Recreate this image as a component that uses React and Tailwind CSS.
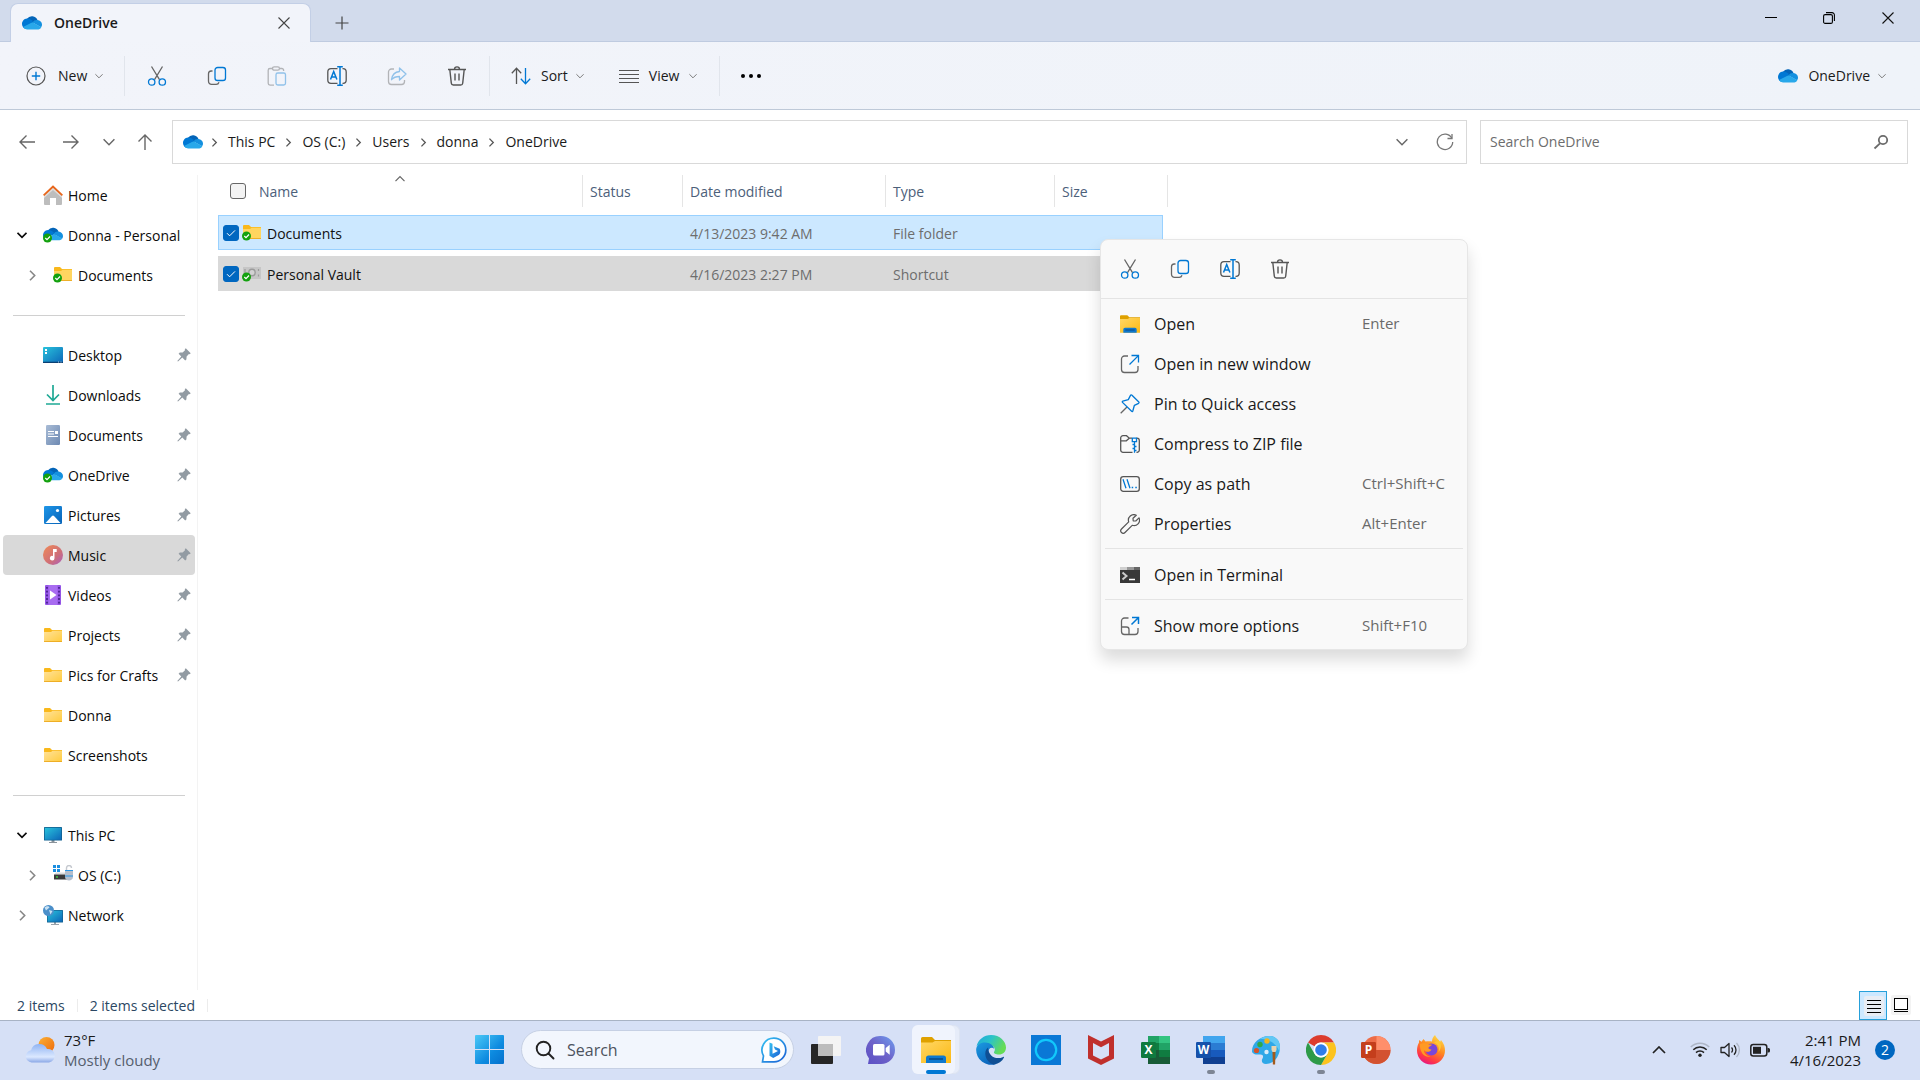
import { useState } from 'react';

const sidebarTop = [
  { label: 'Home', icon: HomeIcon },
  { label: 'Donna - Personal', icon: SyncedCloudIcon, expand: 'open' },
  { label: 'Documents', icon: SyncedFolderIcon, expand: 'closed', nested: true },
];

const sidebarPinned = [
  { label: 'Desktop', icon: DesktopIcon, pinned: true },
  { label: 'Downloads', icon: DownloadsIcon, pinned: true },
  { label: 'Documents', icon: DocumentIcon, pinned: true },
  { label: 'OneDrive', icon: SyncedCloudIcon, pinned: true },
  { label: 'Pictures', icon: PicturesIcon, pinned: true },
  { label: 'Music', icon: MusicIcon, pinned: true, active: true },
  { label: 'Videos', icon: VideosIcon, pinned: true },
  { label: 'Projects', icon: FolderIcon, pinned: true },
  { label: 'Pics for Crafts', icon: FolderIcon, pinned: true },
  { label: 'Donna', icon: FolderIcon },
  { label: 'Screenshots', icon: FolderIcon },
];

const sidebarDevices = [
  { label: 'This PC', icon: ThisPcIcon, expand: 'open' },
  { label: 'OS (C:)', icon: DriveIcon, expand: 'closed', nested: true },
  { label: 'Network', icon: NetworkIcon, expand: 'closed' },
];

const files = [
  { name: 'Documents', icon: SyncedFolderIcon, modified: '4/13/2023 9:42 AM', type: 'File folder' },
  { name: 'Personal Vault', icon: VaultIcon, modified: '4/16/2023 2:27 PM', type: 'Shortcut' },
];

const menuGroups = [
  [
    { label: 'Open', icon: ExplorerIcon, shortcut: 'Enter' },
    { label: 'Open in new window', icon: NewWindowIcon },
    { label: 'Pin to Quick access', icon: PinOutlineIcon },
    { label: 'Compress to ZIP file', icon: ZipIcon },
    { label: 'Copy as path', icon: CopyPathIcon, shortcut: 'Ctrl+Shift+C' },
    { label: 'Properties', icon: WrenchIcon, shortcut: 'Alt+Enter' },
  ],
  [{ label: 'Open in Terminal', icon: TerminalIcon }],
  [{ label: 'Show more options', icon: MoreOptionsIcon, shortcut: 'Shift+F10' }],
];

const taskbarApps = [
  { label: 'Task view', icon: TaskViewIcon },
  { label: 'Chat', icon: ChatIcon },
  { label: 'File Explorer', icon: ExplorerIcon, active: true },
  { label: 'Microsoft Edge', icon: EdgeIcon },
  { label: 'Alexa', icon: AlexaIcon },
  { label: 'McAfee', icon: McAfeeIcon },
  { label: 'Excel', icon: ExcelIcon },
  { label: 'Word', icon: WordIcon, running: true },
  { label: 'Paint', icon: PaintIcon },
  { label: 'Chrome', icon: ChromeIcon, running: true },
  { label: 'PowerPoint', icon: PowerPointIcon },
  { label: 'Firefox', icon: FirefoxIcon },
];

export default function App() {
  return (
    <div className="h-screen flex flex-col overflow-hidden bg-white font-['Open_Sans',sans-serif] text-sm text-[#1a1a1a]">
      <TitleBar />
      <Toolbar />
      <AddressRow />
      <div className="flex-1 min-h-0 flex relative">
        <Sidebar />
        <FileList />
        <ContextMenu />
      </div>
      <StatusBar />
      <Taskbar />
    </div>
  );
}

function TitleBar() {
  return (
    <header className="h-[42px] shrink-0 flex items-end bg-[#d2dbec] border-b border-[#bfcbe0]">
      <div className="ml-[10px] -mb-px w-[301px] h-[39px] flex items-center pl-[11px] pr-4 rounded-t-lg border border-b-0 border-[#c3cfe6] bg-[#f2f4fa]">
        <CloudIcon className="w-5 h-5" />
        <span className="ml-3 font-semibold flex-1">OneDrive</span>
        <button aria-label="Close tab" className="p-1 text-[#444]">
          <CrossIcon className="w-3 h-3" />
        </button>
      </div>
      <button aria-label="New tab" className="h-9 w-9 ml-[13px] flex items-center justify-center text-[#444]">
        <svg viewBox="0 0 14 14" className="w-[14px] h-[14px]" stroke="currentColor" strokeWidth="1.2"><path d="M7 .5v13M.5 7h13" /></svg>
      </button>
      <div className="ml-auto mr-0.5 self-stretch flex text-[#111]">
        <button aria-label="Minimize" className="w-[58px] h-9 flex items-center justify-center">
          <svg viewBox="0 0 12 12" className="w-3 h-3" stroke="#000"><path d="M0 5.500h12" /></svg>
        </button>
        <button aria-label="Restore" className="w-[58px] h-9 flex items-center justify-center">
          <svg viewBox="0 0 12 12" className="w-3 h-3" fill="none" stroke="#000" strokeWidth="1.1">
            <rect x=".6" y="2.6" width="8.8" height="8.8" rx="1.5" />
            <path d="M3 .6h6a2.400 2.400 0 0 1 2.400 2.400v6" />
          </svg>
        </button>
        <button aria-label="Close" className="w-[60px] h-9 flex items-center justify-center">
          <CrossIcon className="w-3 h-3" />
        </button>
      </div>
    </header>
  );
}

function Toolbar() {
  return (
    <div className="h-[68px] shrink-0 flex items-center bg-gradient-to-r from-[#f2f4fa] to-[#eff3f9] border-b border-[#bec9d8]">
      <button className="w-[124px] h-10 pl-[26px] flex items-center">
        <svg viewBox="0 0 20 20" className="w-5 h-5" fill="none">
          <circle cx="10" cy="10" r="9" stroke="#555" strokeWidth="1.2" />
          <path d="M10 5.800v8.400M5.800 10h8.400" stroke="#0078d4" strokeWidth="1.4" />
        </svg>
        <span className="ml-3">New</span>
        <ChevronDown className="w-2 h-2 ml-2 text-[#777]" />
      </button>
      <Divider />
      <div className="flex px-[2px]">
        <ToolButton label="Cut"><CutIcon className="w-5 h-5" /></ToolButton>
        <ToolButton label="Copy"><CopyIcon className="w-5 h-5" /></ToolButton>
        <ToolButton label="Paste" disabled><PasteIcon className="w-5 h-5" /></ToolButton>
        <ToolButton label="Rename"><RenameIcon className="w-5 h-5" /></ToolButton>
        <ToolButton label="Share" disabled><ShareIcon className="w-5 h-5" /></ToolButton>
        <ToolButton label="Delete"><TrashIcon className="w-5 h-5" /></ToolButton>
      </div>
      <Divider />
      <button className="h-10 pl-[21px] flex items-center">
        <svg viewBox="0 0 20 20" className="w-5 h-5" fill="none" strokeWidth="1.3">
          <path d="M5.500 18V2.500M.8 7.200l4.700-4.900 4.700 4.900" stroke="#555" />
          <path d="M14.500 2v15.500M9.800 12.800l4.700 4.900 4.700-4.900" stroke="#0078d4" />
        </svg>
        <span className="ml-[10px]">Sort</span>
        <ChevronDown className="w-2 h-2 ml-2 text-[#777]" />
      </button>
      <button className="h-10 pl-[35px] flex items-center">
        <svg viewBox="0 0 20 20" className="w-5 h-5" stroke="#555" strokeWidth="1.2">
          <path d="M0 4.500h20M0 8.500h20M0 12.500h20M0 16.500h20" />
        </svg>
        <span className="ml-[10px]">View</span>
        <ChevronDown className="w-2 h-2 ml-[10px] mr-[22px] text-[#777]" />
      </button>
      <Divider />
      <button aria-label="See more" className="w-[62px] h-10 flex items-center justify-center">
        <svg viewBox="0 0 22 6" className="w-[22px] h-[6px]"><circle cx="3" cy="3" r="2" /><circle cx="11" cy="3" r="2" /><circle cx="19" cy="3" r="2" /></svg>
      </button>
      <button className="h-10 ml-auto mr-[34px] flex items-center">
        <CloudIcon className="w-5 h-5" />
        <span className="ml-[10px]">OneDrive</span>
        <ChevronDown className="w-2 h-2 ml-2 text-[#777]" />
      </button>
    </div>
  );
}

function Divider() {
  return <div className="w-px h-10 bg-[#e1e5ec]" />;
}

function ToolButton({ label, disabled, children }) {
  return (
    <button aria-label={label} disabled={disabled} className="w-[60px] h-10 flex items-center justify-center disabled:opacity-40">
      {children}
    </button>
  );
}

function AddressRow() {
  const crumbs = ['This PC', 'OS (C:)', 'Users', 'donna', 'OneDrive'];
  return (
    <div className="shrink-0 flex items-center pt-[10px] px-3 text-[#1a1a1a]">
      <button aria-label="Back" className="w-[30px] h-8 flex items-center justify-center">
        <ArrowIcon className="w-4 h-4" />
      </button>
      <button aria-label="Forward" className="w-[30px] ml-[14px] h-8 flex items-center justify-center">
        <ArrowIcon className="w-4 h-4 rotate-180" />
      </button>
      <button aria-label="Recent locations" className="w-[30px] ml-2 h-8 flex items-center justify-center">
        <ChevronDown className="w-3 h-3 text-[#666]" />
      </button>
      <button aria-label="Up" className="w-[30px] ml-[6px] h-8 flex items-center justify-center">
        <ArrowIcon className="w-4 h-4 rotate-90" />
      </button>
      <nav aria-label="Address" className="ml-3 flex-1 h-11 flex items-center border border-[#d9d9d9] pl-[10px] pr-2">
        <CloudIcon className="w-5 h-5 mr-2" />
        {crumbs.map((crumb) => (
          <span key={crumb} className="flex items-center">
            <ChevronRight className="w-[7px] h-[9px] text-[#555]" />
            <a href="#" className="mx-[10px]">{crumb}</a>
          </span>
        ))}
        <button aria-label="Previous locations" className="ml-auto p-2">
          <ChevronDown className="w-3 h-3 text-[#666]" />
        </button>
        <button aria-label="Refresh" className="ml-4 p-1">
          <svg viewBox="0 0 18 18" className="w-[18px] h-[18px]" fill="none" stroke="#777" strokeWidth="1.3">
            <path d="M15.800 5.200A7.700 7.700 0 1 0 16.700 9" />
            <path d="M16 1v4.500h-4.500" />
          </svg>
        </button>
      </nav>
      <div className="ml-[13px] w-[428px] shrink-0 h-11 flex items-center border border-[#d9d9d9] pl-[9px] pr-[18px]">
        <input aria-label="Search OneDrive" placeholder="Search OneDrive" className="flex-1 min-w-0 bg-transparent outline-none placeholder:text-[#6d6d6d]" />
        <svg viewBox="0 0 16 16" className="w-4 h-4" fill="none" stroke="#6b6b6b" strokeWidth="1.8">
          <circle cx="10" cy="6" r="4.2" />
          <path d="M7 9.300L1.500 14.500" />
        </svg>
      </div>
    </div>
  );
}

function Sidebar() {
  return (
    <aside className="w-[198px] shrink-0 mt-[11px] pl-[3px] pr-[2px] border-r border-[#f3f3f3] text-[#0b0b0b]">
      <SidebarSection items={sidebarTop} />
      <SidebarRule />
      <SidebarSection items={sidebarPinned} />
      <SidebarRule />
      <SidebarSection items={sidebarDevices} />
    </aside>
  );
}

function SidebarRule() {
  return <div className="h-10 flex items-center px-[10px]"><hr className="flex-1 border-[#d0d0d0]" /></div>;
}

function SidebarSection({ items }) {
  return (
    <ul>
      {items.map(({ label, icon: Icon, expand, nested, pinned, active }) => (
        <li key={label}>
          <a href="#" className={`h-10 flex items-center rounded-sm pr-1 whitespace-nowrap ${nested ? 'pl-6' : 'pl-[14px]'} ${active ? 'bg-[#d9d9d9]' : ''}`}>
            <span className={`w-[26px] flex items-center ${expand === 'closed' ? 'pl-[2px]' : ''}`}>
              {expand === 'open' && <ChevronDown className="w-[10px] h-[10px]" strokeWidth="1.7" />}
              {expand === 'closed' && <ChevronRight className="w-[7px] h-[11px] text-[#888]" />}
            </span>
            <Icon className="w-5 h-5 shrink-0" />
            <span className="ml-[5px] flex-1 pt-0.5">{label}</span>
            {pinned && <PinIcon className="w-[14px] h-[14px]" />}
          </a>
        </li>
      ))}
    </ul>
  );
}

function FileList() {
  const [selected, setSelected] = useState([0, 1]);
  const toggle = (i) => setSelected(s => (s.includes(i) ? s.filter(n => n !== i) : [...s, i]));

  return (
    <main className="flex-1 min-w-0 pt-[11px] pl-5">
      <table className="table-fixed w-[950px] border-separate border-spacing-0 text-left">
        <colgroup>
          <col className="w-[365px]" />
          <col className="w-[100px]" />
          <col className="w-[203px]" />
          <col className="w-[169px]" />
          <col />
        </colgroup>
        <thead className="text-[#4c607a]">
          <tr className="h-8">
            <th className="font-normal p-0 border-r border-[#e5e5e5] relative">
              <div className="flex items-center pl-3">
                <input type="checkbox" aria-label="Select all" className="appearance-none w-4 h-4 rounded-[3px] border border-[#666] bg-[#f3f3f3]" />
                <span className="ml-[13px] pt-0.5">Name</span>
              </div>
              <ChevronDown className="absolute inset-x-0 mx-auto -top-px w-[10px] h-[10px] rotate-180 text-[#666]" />
            </th>
            <HeaderCell>Status</HeaderCell>
            <HeaderCell>Date modified</HeaderCell>
            <HeaderCell>Type</HeaderCell>
            <HeaderCell>Size</HeaderCell>
          </tr>
        </thead>
        <tbody className="text-[#6d6d6d]">
          {files.map(({ name, icon: Icon, modified, type }, i) => {
            const tone = i === 0 ? 'bg-[#cce8ff] border-[#99d1ff]' : 'bg-[#d9d9d9] border-[#d9d9d9]';
            return (
              <tr key={name}>
                <td className={i === 0 ? 'p-0 pt-2' : 'p-0 pt-[6px]'}>
                  <div className={`h-[35px] flex items-center pl-1 border border-r-0 ${tone}`}>
                    <input
                      type="checkbox"
                      id={`file-${i}`}
                      checked={selected.includes(i)}
                      onChange={() => toggle(i)}
                      className="appearance-none w-4 h-4 rounded-[3px] bg-white border border-[#0067c0] checked:bg-[#0067c0] checked:bg-[url('data:image/svg+xml,%3Csvg%20xmlns=%22http://www.w3.org/2000/svg%22%20viewBox=%220%200%2014%2014%22%3E%3Cpath%20d=%22M3%207.200l2.600%202.600L11%204.400%22%20fill=%22none%22%20stroke=%22white%22/%3E%3C/svg%3E')]"
                    />
                    <Icon className="w-5 h-5 ml-[3px]" />
                    <label htmlFor={`file-${i}`} className="ml-[5px] pt-0.5 text-[#111]">{name}</label>
                  </div>
                </td>
                <FileCell tone={tone} first={i === 0} />
                <FileCell tone={tone} first={i === 0}>{modified}</FileCell>
                <FileCell tone={tone} first={i === 0}>{type}</FileCell>
                <td className={i === 0 ? 'p-0 pt-2 pr-[5px]' : 'p-0 pt-[6px] pr-[5px]'}>
                  <div className={`h-[35px] border border-l-0 ${tone}`} />
                </td>
              </tr>
            );
          })}
        </tbody>
      </table>
    </main>
  );
}

function HeaderCell({ children }) {
  return <th className="font-normal p-0 pt-0.5 pl-[7px] border-r border-[#e5e5e5]">{children}</th>;
}

function FileCell({ tone, first, children }) {
  return (
    <td className={first ? 'p-0 pt-2' : 'p-0 pt-[6px]'}>
      <div className={`h-[35px] flex items-center pt-0.5 pl-[7px] border-y ${tone}`}>{children}</div>
    </td>
  );
}

function ContextMenu() {
  return (
    <div role="menu" className="absolute left-[1100px] top-[75px] w-[368px] rounded-lg border border-[#e6e6e6] bg-[#f9f9f9] shadow-[0_10px_16px_rgba(0,0,0,0.14)] pb-[3px]">
      <div className="h-[59px] flex items-center pl-1 border-b border-[#e4e4e4]">
        <MenuIconButton label="Cut"><CutIcon className="w-5 h-5" /></MenuIconButton>
        <MenuIconButton label="Copy"><CopyIcon className="w-5 h-5" /></MenuIconButton>
        <MenuIconButton label="Rename"><RenameIcon className="w-5 h-5" /></MenuIconButton>
        <MenuIconButton label="Delete"><TrashIcon className="w-5 h-5" /></MenuIconButton>
      </div>
      {menuGroups.map((group, i) => (
        <div key={i} className={i === 0 ? 'pt-[5px] pb-1' : 'mx-1 border-t border-[#e4e4e4] pt-[6px] pb-1 last:pb-0'}>
          {group.map(({ label, icon: Icon, shortcut }) => (
            <button key={label} role="menuitem" className={`w-full h-10 flex items-center text-left ${i === 0 ? 'pl-[19px]' : 'pl-[15px]'}`}>
              <Icon className="w-5 h-5" />
              <span className="ml-[14px] w-[208px] text-base">{label}</span>
              <span className="text-[15px] text-[#6a6a6a]">{shortcut}</span>
            </button>
          ))}
        </div>
      ))}
    </div>
  );
}

function MenuIconButton({ label, children }) {
  return <button aria-label={label} className="w-[50px] h-10 flex items-center justify-center">{children}</button>;
}

function StatusBar() {
  return (
    <footer className="h-[30px] shrink-0 flex items-center pl-[17px] pr-[9px] text-[#2b4763]">
      <span className="pt-0.5">2 items</span>
      <span className="w-px h-[13px] mx-3 bg-[#ececec]" />
      <span className="pt-0.5">2 items selected</span>
      <span className="w-px h-[13px] mx-3 bg-[#ececec]" />
      <button aria-label="Details view" className="ml-auto w-7 h-[29px] flex items-center justify-center border border-[#26a0da] bg-[#cce8ff]">
        <svg viewBox="0 0 20 20" className="w-5 h-5 mt-px ml-px"><rect width="20" height="20" rx="2" fill="#e8edf4" /><path d="M3 4.500h14M3 8.500h14M3 12.500h14M3 16.500h14" stroke="#000" /></svg>
      </button>
      <button aria-label="Large icons view" className="ml-1">
        <svg viewBox="0 0 20 20" className="w-5 h-5" stroke="#000"><rect width="20" height="20" rx="2" fill="#f3f3f3" stroke="none" /><rect x="3.5" y="3.5" width="13" height="11" fill="#fff" /><path d="M3 16.500h14" /></svg>
      </button>
    </footer>
  );
}

function Taskbar() {
  return (
    <div className="h-[60px] shrink-0 grid grid-cols-[1fr_auto_1fr] items-center pb-0.5 bg-[#d6e0f6] border-t border-[#a8b3c5] text-[15px]">
      <button className="flex items-center text-left pl-6 leading-5">
        <WeatherIcon className="w-8 h-8" />
        <span className="ml-2">
          <span className="block">73°F</span>
          <span className="block text-[#555e6d]">Mostly cloudy</span>
        </span>
      </button>

      <div className="flex items-center">
        <button aria-label="Start" className="w-[55px] h-12 flex items-center justify-center">
          <StartIcon className="w-[29px] h-[29px]" />
        </button>
        <div className="mx-1 w-[273px] h-[39px] rounded-full bg-[#f2f6fd] border border-[#c6d0e4] flex items-center pl-[13px] pr-[6px]">
          <svg viewBox="0 0 20 20" className="w-5 h-5" fill="none" stroke="#222" strokeWidth="1.9">
            <circle cx="8.5" cy="8.5" r="6.8" /><path d="M13.500 13.500l5 5" strokeLinecap="round" />
          </svg>
          <input aria-label="Search" placeholder="Search" className="ml-3 flex-1 min-w-0 bg-transparent outline-none placeholder:text-[#4d535e] text-base" />
          <BingIcon className="w-[26px] h-[26px]" />
        </div>
        {taskbarApps.map(({ label, icon: Icon, active, running }) => (
          <button key={label} aria-label={label} className="w-[55px] h-[49px] relative flex items-center justify-center">
            {active && <span className="absolute inset-y-0 left-1 w-[48px] rounded-md border border-[#dde4f2] bg-[#e6ecf9]" />}
            {active && <span className="absolute inset-y-0 left-1 w-[43px] rounded-md bg-[#f0f4fd]" />}
            <Icon className="relative w-[30px] h-[30px]" />
            {active && <span className="absolute bottom-0 w-5 h-1 rounded-full bg-[#0078d4]" />}
            {running && <span className="absolute bottom-0 w-2 h-1 rounded-full bg-[#7d8594]" />}
          </button>
        ))}
      </div>

      <div className="flex items-center justify-end pr-[25px]">
        <button aria-label="Show hidden icons" className="mr-6">
          <svg viewBox="0 0 14 8" className="w-[14px] h-2" fill="none" stroke="#222" strokeWidth="1.7"><path d="M1 7l6-6 6 6" /></svg>
        </button>
        <button aria-label="Network, volume and battery" className="flex items-center gap-[10px]">
          <WifiIcon className="w-5 h-5" />
          <VolumeIcon className="w-5 h-5" />
          <BatteryIcon className="w-5 h-5" />
        </button>
        <button className="ml-5 text-right leading-5">
          <span className="block">2:41 PM</span>
          <span className="block">4/16/2023</span>
        </button>
        <span className="ml-[14px] w-5 h-5 rounded-full bg-[#0067c0] text-white text-sm leading-5 text-center">2</span>
      </div>
    </div>
  );
}

// Line icons

function CrossIcon({ className }) {
  return <svg viewBox="0 0 12 12" className={className} stroke="currentColor" strokeWidth="1.1"><path d="M.5.5l11 11M11.500.5l-11 11" /></svg>;
}

function ChevronDown({ className, strokeWidth = 1.2 }) {
  return <svg viewBox="0 0 10 10" className={className} fill="none" stroke="currentColor" strokeWidth={strokeWidth}><path d="M.5 2.800L5 7.300l4.500-4.500" /></svg>;
}

function ChevronRight({ className }) {
  return <svg viewBox="0 0 7 11" className={className} fill="none" stroke="currentColor" strokeWidth="1.6"><path d="M1 .8l4.700 4.700L1 10.200" /></svg>;
}

function ArrowIcon({ className }) {
  return <svg viewBox="0 0 16 16" className={className} fill="none" stroke="#666" strokeWidth="1.4"><path d="M16 8H1M7.500 1.500L1 8l6.500 6.500" /></svg>;
}

function CutIcon({ className }) {
  return (
    <svg viewBox="0 0 20 20" className={className} fill="none" strokeWidth="1.3">
      <path d="M4.500.5l8 13.200M15.500.5l-8 13.200" stroke="#666" />
      <circle cx="4.7" cy="16" r="3.2" stroke="#0078d4" />
      <circle cx="15.3" cy="16" r="3.2" stroke="#0078d4" />
    </svg>
  );
}

function CopyIcon({ className }) {
  return (
    <svg viewBox="0 0 20 20" className={className} fill="none" strokeWidth="1.3">
      <path d="M5.500 5H4.200A2.800 2.800 0 0 0 1.500 7.800v7.500A3 3 0 0 0 4.500 18.300h4.700a3 3 0 0 0 2.800-2.100" stroke="#666" />
      <rect x="8" y="1.5" width="10.5" height="13" rx="2.6" stroke="#0078d4" />
    </svg>
  );
}

function PasteIcon({ className }) {
  return (
    <svg viewBox="0 0 20 20" className={className} fill="none" strokeWidth="1.3">
      <path d="M6 2.500H3A1.800 1.800 0 0 0 1.200 4.300v13A1.800 1.800 0 0 0 3 19.100h4M13 2.500h1.800a1.800 1.800 0 0 1 1.800 1.800v.8" stroke="#555" />
      <rect x="5.5" y=".8" width="7" height="3.4" rx="1.7" stroke="#555" />
      <rect x="9" y="7" width="9.5" height="12" rx="1.8" stroke="#0078d4" />
    </svg>
  );
}

function RenameIcon({ className }) {
  return (
    <svg viewBox="0 0 20 20" className={className} fill="none" strokeWidth="1.3">
      <path d="M10.500 2.600H4A3.300 3.300 0 0 0 .8 5.900v8.200A3.300 3.300 0 0 0 4 17.400h6.500M15.500 2.600h.5a3.300 3.300 0 0 1 3.200 3.300v8.200a3.300 3.300 0 0 1-3.200 3.300h-.5" stroke="#555" />
      <path d="M3.500 13.500L6.700 5.500l3.200 8M4.600 11h4.200" stroke="#0078d4" strokeWidth="1.5" />
      <path d="M13 1v18M10.200.8h5.600M10.200 19.200h5.600" stroke="#0078d4" strokeWidth="1.5" />
    </svg>
  );
}

function ShareIcon({ className }) {
  return (
    <svg viewBox="0 0 20 20" className={className} fill="none" strokeWidth="1.3" strokeLinejoin="round">
      <path d="M7 3H4.500A3 3 0 0 0 1.500 6v9.500a3 3 0 0 0 3 3h10a3 3 0 0 0 3-3V14" stroke="#555" />
      <path d="M12.500 2l6.500 6-6.500 6v-3.500c-3.800 0-6 .8-8 3.200.6-4.500 3-7.700 8-8.200z" stroke="#0078d4" />
    </svg>
  );
}

function TrashIcon({ className }) {
  return (
    <svg viewBox="0 0 20 20" className={className} fill="none" stroke="#555" strokeWidth="1.4">
      <path d="M1 3.500h18M7.500 3.200a2.500 2.300 0 0 1 5 0M2.800 3.500l1.500 13.700a2 2 0 0 0 2 1.800h7.400a2 2 0 0 0 2-1.800l1.500-13.700M8 7.500v7M12 7.500v7" />
    </svg>
  );
}

function NewWindowIcon({ className }) {
  return (
    <svg viewBox="0 0 20 20" className={className} fill="none" strokeWidth="1.3">
      <path d="M8 2H4.500A3 3 0 0 0 1.500 5v10.500a3 3 0 0 0 3 3H15a3 3 0 0 0 3-3V12" stroke="#666" />
      <path d="M9.500 10.500L18.400 1.600M11.500 1.500h7v7" stroke="#0078d4" />
    </svg>
  );
}

function PinOutlineIcon({ className }) {
  return (
    <svg viewBox="0 0 20 20" className={className} fill="none" strokeWidth="1.3" strokeLinejoin="round">
      <path d="M7 13L.7 19.300" stroke="#666" />
      <path d="M12 1.200l6.800 6.800c.5.500.3 1-.2 1.300l-4.200 2-1.600 5.700c-.2.600-.8.700-1.200.3L2.500 8.400c-.4-.4-.3-1 .3-1.200L8.300 5.600l2.200-4.200c.3-.6 1-.7 1.500-.2z" stroke="#0078d4" />
    </svg>
  );
}

function ZipIcon({ className }) {
  return (
    <svg viewBox="0 0 20 20" className={className} fill="none" strokeWidth="1.3">
      <path d="M12.500 18.300H3a2.300 2.300 0 0 1-2.300-2.300V4A2.300 2.300 0 0 1 3 1.700h3.500l2.800 2.500H12M16.500 4.200h.5A2.300 2.300 0 0 1 19.300 6.500v9.500a2.300 2.300 0 0 1-2.300 2.300h-.5M.7 6.800h5.600l3-2.600" stroke="#555" />
      <path d="M12 4.200h5M12.300 4.200v3.500h4.200V4.200M14.500 7.700v11M12.500 10.500h2M14.500 12.500h2M12.500 14.500h2M14.500 16.500h2" stroke="#0078d4" />
    </svg>
  );
}

function CopyPathIcon({ className }) {
  return (
    <svg viewBox="0 0 20 20" className={className} fill="none">
      <rect x=".7" y="2.7" width="18.6" height="14.6" rx="2.6" stroke="#555" strokeWidth="1.3" />
      <path d="M3 5.300l3 9M7 5.300l3 9" stroke="#0078d4" strokeWidth="1.3" />
      <path d="M11.700 13.500h1.500M15.300 13.500h1.500" stroke="#0078d4" strokeWidth="1.6" />
    </svg>
  );
}

function WrenchIcon({ className }) {
  return (
    <svg viewBox="0 0 20 20" className={className} fill="none" stroke="#555" strokeWidth="1.2" strokeLinejoin="round">
      <path d="M16.300 1.200a5.500 5.500 0 0 0-7.600 6.700L1.500 15a2.400 2.400 0 0 0 3.500 3.500l7.200-7.200a5.500 5.500 0 0 0 6.800-7.500L15.800 7l-2.600-.2-.2-2.500z" />
    </svg>
  );
}

function TerminalIcon({ className }) {
  return (
    <svg viewBox="0 0 20 20" className={className}>
      <path d="M0 2h20v16H0z" fill="#383838" />
      <path d="M0 2h7v3H0z" fill="#d0d0d0" /><path d="M7 2h7v3H7z" fill="#999" /><path d="M14 2h6v3h-6z" fill="#666" />
      <path d="M2.500 7.500L6.500 11l-4 3.500" fill="none" stroke="#ccc" strokeWidth="2" />
      <path d="M9 14.500h6" stroke="#fff" strokeWidth="1.5" />
    </svg>
  );
}

function MoreOptionsIcon({ className }) {
  return (
    <svg viewBox="0 0 20 20" className={className} fill="none" strokeWidth="1.3">
      <path d="M8.500 2H4.500A3 3 0 0 0 1.500 5v10.500a3 3 0 0 0 3 3H15a3 3 0 0 0 3-3V12M1.500 11h5a2.500 2.500 0 0 1 2.500 2.500v5" stroke="#666" />
      <path d="M11.500 8.500L18.300 1.700M12 1.500h6.500v6.500" stroke="#0078d4" strokeWidth="1.5" />
    </svg>
  );
}

function PinIcon({ className }) {
  return (
    <svg viewBox="0 0 14 14" className={className}>
      <path d="M8.800.3l4.900 4.900-1 1-.8-.1-2.300 2.500-.2 2.800-1.200 1-2.900-2.900L1 13.600l-.7-.7 4-4.400L1.600 5.700l1.200-1.100 2.800-.2L8 2.200l-.2-.9z" fill="#929ba3" />
    </svg>
  );
}

// Folder and location icons

function CloudIcon({ className }) {
  return (
    <svg viewBox="0 0 20 20" className={className}>
      <path d="M5 5.800A6 6 0 0 1 15.500 7L10 11z" fill="#0364b8" />
      <path d="M5 5.500c2-.2 4 1 6 2.600L5 16A4.900 4.900 0 0 1 0 11.200C0 8.200 2 5.700 5 5.500z" fill="#0078d4" />
      <path d="M10.500 9.500c1-2 3-2.700 5-2.500 2.500.2 4.500 2 4.500 4.500 0 1.400-.5 2.300-1 2.800z" fill="#1490df" />
      <path d="M10.500 9.200l8.800 5a3.500 3.500 0 0 1-2.800 2.300H5a5 5 0 0 1-4-2.500z" fill="#28a8ea" />
    </svg>
  );
}

function SyncBadge() {
  return (
    <g>
      <circle cx="4.5" cy="13" r="4.5" fill="#13a10e" />
      <path d="M2.300 13l1.700 1.700 3-3.200" fill="none" stroke="#fff" strokeWidth="1.2" />
    </g>
  );
}

function SyncedCloudIcon({ className }) {
  return (
    <svg viewBox="0 0 20 20" className={className}>
      <path d="M5 5.300A6 6 0 0 1 15.500 6.500L10 11z" fill="#0364b8" />
      <path d="M5 5c2-.2 4 1 6 2.600L5 15A4.800 4.800 0 0 1 0 10.500C0 7.500 2 5.200 5 5z" fill="#0078d4" />
      <path d="M10.500 9c1-2 3-2.700 5-2.500 2.500.2 4.500 2 4.500 4.500 0 1.400-.5 2.300-1 2.800z" fill="#1490df" />
      <path d="M10.500 8.800l8.800 4.700a3.500 3.500 0 0 1-2.800 1.700H5z" fill="#28a8ea" />
      <SyncBadge />
    </svg>
  );
}

function FolderIcon({ className }) {
  return (
    <svg viewBox="0 0 20 20" className={className}>
      <defs>
        <linearGradient id="folder" x1="0" y1="0" x2="1" y2="1"><stop offset="0" stopColor="#ffe29a" /><stop offset="1" stopColor="#ffcb3d" /></linearGradient>
      </defs>
      <path d="M1 4a1 1 0 0 1 1-1h5l2 2h10v4H1z" fill="#f9b81b" />
      <path d="M1 7h7l1.500-1.200H19V17H1z" fill="url(#folder)" />
      <path d="M1 16.200h18V17H1z" fill="#eaa51b" />
    </svg>
  );
}

function SyncedFolderIcon({ className }) {
  return (
    <svg viewBox="0 0 20 20" className={className}>
      <path d="M1 3a1 1 0 0 1 1-1h5l2 2h10v4H1z" fill="#f9b81b" />
      <path d="M1 6h7l1.500-1.200H19V16H1z" fill="#ffd560" />
      <path d="M1 15.200h18V16H1z" fill="#eaa51b" />
      <SyncBadge />
    </svg>
  );
}

function VaultIcon({ className }) {
  return (
    <svg viewBox="0 0 20 20" className={className}>
      <rect x="1" y="3" width="18" height="12" fill="#c6c6c6" />
      <circle cx="10" cy="8.5" r="3.2" fill="#d2d2d2" stroke="#9b9b9b" strokeWidth="1.4" />
      <path d="M3 5v6M16.500 5v2M16.500 10.500v2" stroke="#9b9b9b" strokeWidth="1.2" />
      <SyncBadge />
    </svg>
  );
}

function HomeIcon({ className }) {
  return (
    <svg viewBox="0 0 20 20" className={className}>
      <path d="M10 2L1 11v8a1 1 0 0 0 1 1h5v-7h6v7h5a1 1 0 0 0 1-1v-8z" fill="#bdbdbd" />
      <path d="M10 2L1 11v2l9-8 9 8v-2z" fill="#dedede" />
      <path d="M.6 10.400L10 1.500l9.400 8.900" fill="none" stroke="#e8661b" strokeWidth="1.9" />
    </svg>
  );
}

function DesktopIcon({ className }) {
  return (
    <svg viewBox="0 0 20 20" className={className}>
      <defs><linearGradient id="desk" x1="0" y1="0" x2="1" y2="1"><stop offset="0" stopColor="#29c3dc" /><stop offset="1" stopColor="#0c66b8" /></linearGradient></defs>
      <rect y="2" width="20" height="16" rx="1" fill="url(#desk)" />
      <path d="M0 16.800h20v.7a.5.500 0 0 1-.5.500H.5a.5.500 0 0 1-.5-.5z" fill="#0b3f72" />
      <path d="M2 4h2v2H2zM2 7h2v2H2z" fill="#fff" />
      <path d="M15 17h1M17.500 17h1" stroke="#fff" strokeWidth=".7" />
    </svg>
  );
}

function DownloadsIcon({ className }) {
  return (
    <svg viewBox="0 0 20 20" className={className} fill="none" stroke="#1fa995" strokeWidth="1.7">
      <path d="M10 0v15M4 9.500l6 6 6-6M3 19h14" />
    </svg>
  );
}

function DocumentIcon({ className }) {
  return (
    <svg viewBox="0 0 20 20" className={className}>
      <defs><linearGradient id="doc" x1="0" y1="0" x2="1" y2="1"><stop offset="0" stopColor="#a9bcd6" /><stop offset="1" stopColor="#6d89b2" /></linearGradient></defs>
      <rect x="3" width="14" height="20" rx="1.2" fill="url(#doc)" />
      <path d="M5 6.500h6M5 9h6M5 11.500h10" stroke="#fff" strokeWidth="1.1" />
      <path d="M12 6h3v3h-3z" fill="#fff" />
    </svg>
  );
}

function PicturesIcon({ className }) {
  return (
    <svg viewBox="0 0 20 20" className={className}>
      <defs><linearGradient id="pic" x1="0" y1="0" x2="1" y2="1"><stop offset="0" stopColor="#1e96e8" /><stop offset="1" stopColor="#0763b8" /></linearGradient></defs>
      <rect x="1" y="1" width="18" height="18" rx="1.3" fill="url(#pic)" />
      <circle cx="14.5" cy="5.5" r="1.6" fill="#fff" />
      <path d="M2.500 18l6.500-7a1.500 1.500 0 0 1 2 0l6.500 7z" fill="#fff" />
    </svg>
  );
}

function MusicIcon({ className }) {
  return (
    <svg viewBox="0 0 20 20" className={className}>
      <defs><linearGradient id="mus" x1="0" y1="0" x2="1" y2="1"><stop offset="0" stopColor="#f08a55" /><stop offset=".6" stopColor="#cf6f78" /><stop offset="1" stopColor="#a95fc0" /></linearGradient></defs>
      <circle cx="10" cy="10" r="10" fill="url(#mus)" />
      <path d="M10 4h3.700v3h-2.200v6.200A2.300 2.300 0 1 1 10 11z" fill="#fff" />
    </svg>
  );
}

function VideosIcon({ className }) {
  return (
    <svg viewBox="0 0 20 20" className={className}>
      <rect x="2" width="16" height="20" rx="1" fill="#9455e6" />
      <rect x="5.5" y="0" width="9" height="20" fill="#a86cf0" />
      <path d="M4 2v17M16 2v17" stroke="#4b2390" strokeWidth="1.8" strokeDasharray="1.8 1.9" />
      <path d="M7 5.500l6.500 4.500L7 14.500z" fill="#fff" />
    </svg>
  );
}

function ThisPcIcon({ className }) {
  return (
    <svg viewBox="0 0 20 20" className={className}>
      <path d="M8.500 15h3v2h2.500v1H6v-1h2.500z" fill="#8a939b" />
      <rect x="1" y="2" width="18" height="13.5" rx=".6" fill="#12608f" />
      <rect x="1.8" y="2.8" width="16.4" height="12" fill="url(#desk)" />
    </svg>
  );
}

function DriveIcon({ className }) {
  return (
    <svg viewBox="0 0 20 20" className={className}>
      <path d="M0 0h3v3H0zM4 0h3v3H4zM0 4h3v3H0zM4 4h3v3H4z" fill="#1b8ee0" />
      <path d="M3 7.500h12v2H1z" fill="#ddd" />
      <rect x="1" y="9.5" width="14" height="5" fill="#3a3a3a" />
      <circle cx="4" cy="12" r=".9" fill="#3fd13f" />
      <path d="M13.500 5V3a2.500 2.500 0 0 1 5 0" fill="none" stroke="#c5c9cf" strokeWidth="1.4" />
      <path d="M12 5h8v7c0 2-2 3.500-4 3.500S12 14 12 12z" fill="#b6bfcc" />
      <path d="M12 5.500h8M12 11h8" stroke="#2b98e6" />
    </svg>
  );
}

function NetworkIcon({ className }) {
  return (
    <svg viewBox="0 0 20 20" className={className}>
      <path d="M11 17h2v2h3v1H8v-1h3z" fill="#9aa3ab" />
      <rect x="4" y="5" width="16" height="12.5" rx=".6" fill="#12608f" />
      <rect x="4.7" y="5.7" width="14.6" height="11" fill="url(#desk)" />
      <circle cx="5.5" cy="5.5" r="5.5" fill="#4b8fc9" />
      <path d="M1.500 2.500C4 .5 6 1 6.500 2.500L3 5.500zM6 5l3.500 1-2 3.500z" fill="#c9e2f3" />
    </svg>
  );
}

// Taskbar icons

function WeatherIcon({ className }) {
  return (
    <svg viewBox="0 0 32 32" className={className}>
      <defs>
        <linearGradient id="sun" x1="0" y1="0" x2="1" y2="1"><stop offset="0" stopColor="#fbb034" /><stop offset="1" stopColor="#ee6a0c" /></linearGradient>
        <linearGradient id="wcloud" x1="0" y1="0" x2="0" y2="1"><stop offset="0" stopColor="#8fb3f2" /><stop offset=".7" stopColor="#dbe8ff" /><stop offset="1" stopColor="#8aa7e6" /></linearGradient>
      </defs>
      <circle cx="22.5" cy="11" r="8" fill="url(#sun)" />
      <path d="M7.500 28.500a6.200 6.200 0 0 1-.5-12.300A8.500 8.500 0 0 1 23 15a6.800 6.800 0 0 1 2 13.500z" fill="url(#wcloud)" />
    </svg>
  );
}

function StartIcon({ className }) {
  return (
    <svg viewBox="0 0 29 29" className={className}>
      <defs><linearGradient id="win" gradientUnits="userSpaceOnUse" x1="0" y1="0" x2="29" y2="29"><stop offset="0" stopColor="#4cc9f7" /><stop offset=".6" stopColor="#0d8be0" /><stop offset="1" stopColor="#0570cc" /></linearGradient></defs>
      <path d="M1 0h13v14H0V1a1 1 0 0 1 1-1zM15 0h13a1 1 0 0 1 1 1v13H15zM0 15h14v14H1a1 1 0 0 1-1-1zM15 15h14v13a1 1 0 0 1-1 1H15z" fill="url(#win)" />
    </svg>
  );
}

function BingIcon({ className }) {
  return (
    <svg viewBox="0 0 26 26" className={className}>
      <defs><linearGradient id="bing" x1="0" y1="0" x2="1" y2="1"><stop offset="0" stopColor="#35c1f1" /><stop offset="1" stopColor="#1a5fd4" /></linearGradient></defs>
      <path d="M13 1.200A11.800 11.800 0 1 1 13 24.800H1.500l1-6A11.800 11.800 0 0 1 13 1.200z" fill="#fff" stroke="url(#bing)" strokeWidth="1.7" />
      <path d="M8.500 5.500l3 1.200v10L17 14l-3-1.500-1.300-3.200 6 2.500c1.200 2.700.6 5.200-1 6.300l-5.500 3-3.700-2.300z" fill="url(#bing)" />
    </svg>
  );
}

function TaskViewIcon({ className }) {
  return (
    <svg viewBox="0 0 30 30" className={className}>
      <rect y="9" width="22" height="20" rx="1" fill="#262626" />
      <rect x="7" y="1" width="23" height="20" rx="1" fill="#f4f4f4" />
      <path d="M7 9h15v12H7z" fill="#bcbcbc" />
    </svg>
  );
}

function ChatIcon({ className }) {
  return (
    <svg viewBox="0 0 30 30" className={className}>
      <defs><linearGradient id="chat" x1="0" y1="1" x2="1" y2="0"><stop offset="0" stopColor="#5b4fc4" /><stop offset=".5" stopColor="#6e62c9" /><stop offset="1" stopColor="#6ea0f0" /></linearGradient></defs>
      <path d="M15 1a14 14 0 1 1 0 28H2l1-5.500A14 14 0 0 1 15 1z" fill="url(#chat)" />
      <rect x="7" y="9" width="11.5" height="11.5" rx="1.5" fill="#fff" />
      <path d="M19.700 13l4-3.200v10l-4-3.200z" fill="#fff" />
    </svg>
  );
}

function ExplorerIcon({ className }) {
  return (
    <svg viewBox="0 0 30 30" className={className}>
      <defs><linearGradient id="expl" x1="0" y1="0" x2="1" y2="1"><stop offset="0" stopColor="#ffd766" /><stop offset="1" stopColor="#fcb913" /></linearGradient></defs>
      <path d="M0 3.500A1.500 1.500 0 0 1 1.500 2H11l3 3h16v6H0z" fill="#dfa100" />
      <path d="M0 7.500h11.500L14 6h16v22H0z" fill="url(#expl)" />
      <path d="M5 28v-5a2.500 2.500 0 0 1 2.500-2.500h15A2.500 2.500 0 0 1 25 23v5z" fill="#0f79cf" />
      <path d="M8 24h14" stroke="#0b4a86" strokeWidth="1.5" />
    </svg>
  );
}

function EdgeIcon({ className }) {
  return (
    <svg viewBox="0 0 30 30" className={className}>
      <defs>
        <linearGradient id="edgeTop" x1="0" y1="0" x2="1" y2=".4"><stop offset="0" stopColor="#1fa7dd" /><stop offset=".5" stopColor="#2bc3c8" /><stop offset="1" stopColor="#66dc55" /></linearGradient>
        <linearGradient id="edgeMid" x1="0" y1="0" x2=".6" y2="1"><stop offset="0" stopColor="#1b9be2" /><stop offset="1" stopColor="#0c64bb" /></linearGradient>
      </defs>
      <path d="M.5 11.500C2 4.500 8 0 15 0c9 0 15 6.500 15 12.500 0 4.500-3.300 7-7 7-3.600 0-5.500-1.300-5-2.500 2-2.500.5-6-3.500-7C9 8.700 3.500 8 .5 11.500z" fill="url(#edgeTop)" />
      <path d="M.2 14c.5-4.500 4.800-6.700 9-6.500 5 .2 8.500 3 9 6.500-2-2.500-6-1-6 3.500 0 6 4 10 8 11.500A15 15 0 0 1 .2 14z" fill="url(#edgeMid)" />
      <path d="M12 12.500C7 16 9 27 17.500 29.500 22.500 29 26 26.500 28 22.500c.3-.7-.2-.9-.8-.6-6.500 3-14.500.5-15.200-9.400z" fill="#0f4f94" />
    </svg>
  );
}

function AlexaIcon({ className }) {
  return (
    <svg viewBox="0 0 30 30" className={className}>
      <rect width="30" height="30" fill="#0a78d6" />
      <circle cx="15" cy="15" r="10.2" fill="none" stroke="#12c8fb" strokeWidth="2.2" />
      <path d="M12 24.500l2.500 1.500c3-.5 5-1.500 6.500-3.500-3 1.500-6 2-9 2z" fill="#12c8fb" />
    </svg>
  );
}

function McAfeeIcon({ className }) {
  return (
    <svg viewBox="0 0 30 30" className={className}>
      <path d="M2 0l13 6.500L28 0v23.500L15 30 2 23.500zM7 8v12.500l8 4 8-4V8l-8 4.200z" fill="#c0302c" fillRule="evenodd" />
    </svg>
  );
}

function OfficeBadge({ color, letter }) {
  return (
    <g>
      <rect y="7" width="15" height="16" rx="1.2" fill={color} />
      <text x="7.5" y="19" textAnchor="middle" fontSize="12" fontWeight="700" fill="#fff">{letter}</text>
    </g>
  );
}

function ExcelIcon({ className }) {
  return (
    <svg viewBox="0 0 30 30" className={className}>
      <path d="M7 1h11v7H7z" fill="#21a366" /><path d="M18 1h11v7H18z" fill="#33c481" />
      <path d="M7 8h11v7H7z" fill="#107c41" /><path d="M18 8h11v7H18z" fill="#21a366" />
      <path d="M7 15h11v7H7z" fill="#185c37" /><path d="M18 15h11v7H18z" fill="#107c41" />
      <path d="M7 22h22v7H7z" fill="#185c37" />
      <OfficeBadge color="#0f7a3f" letter="X" />
    </svg>
  );
}

function WordIcon({ className }) {
  return (
    <svg viewBox="0 0 30 30" className={className}>
      <path d="M7 1h22v7H7z" fill="#41a5ee" /><path d="M7 8h22v7H7z" fill="#2b7cd3" />
      <path d="M7 15h22v7H7z" fill="#185abd" /><path d="M7 22h22v7H7z" fill="#103f91" />
      <OfficeBadge color="#1651aa" letter="W" />
    </svg>
  );
}

function PowerPointIcon({ className }) {
  return (
    <svg viewBox="0 0 30 30" className={className}>
      <circle cx="15.5" cy="15" r="14" fill="#ed6c47" />
      <path d="M15.500 1a14 14 0 0 1 14 14h-14z" fill="#ff8f6b" />
      <path d="M1.500 15h28a14 14 0 0 1-28 0z" fill="#d35230" />
      <OfficeBadge color="#c43e1c" letter="P" />
    </svg>
  );
}

function PaintIcon({ className }) {
  return (
    <svg viewBox="0 0 30 30" className={className}>
      <path d="M18 1c7 0 11 5 11 11 0 9-6 17-14 17-4 0-5-3-3.500-5.500 1.500-2.800 0-4.500-3-4S1 19 1 16C1 8 9 1 18 1z" fill="#2fa8e8" />
      <path d="M18 1c7 0 11 5 11 11 0 1.500-.2 3-.6 4.500C25 8 16 3 9 4.200 11.500 2.200 14.700 1 18 1z" fill="#62c8f5" />
      <circle cx="16" cy="6" r="2.7" fill="#f3b51f" /><circle cx="9" cy="9.5" r="2.7" fill="#2fa84a" /><circle cx="5.5" cy="15.5" r="2.6" fill="#d2542b" />
      <circle cx="15.5" cy="17" r="2.2" fill="#d8ecfa" />
      <path d="M20.500 11h5v4l-1 2h-3l-1-2z" fill="#e9d3b0" /><path d="M21.500 17h3l-.4 12.500h-2.200z" fill="#a35a1c" />
    </svg>
  );
}

function ChromeIcon({ className }) {
  return (
    <svg viewBox="0 0 30 30" className={className}>
      <path d="M15 0a15 15 0 0 1 13 7.500H15a7.500 7.500 0 0 0-6.500 3.750L2 7.500A15 15 0 0 1 15 0z" fill="#dc3c2e" />
      <path d="M28 7.500A15 15 0 0 1 15 30l6.500-11.250A7.500 7.500 0 0 0 15 7.500z" fill="#fcc31e" />
      <path d="M2 7.500l6.500 11.250A7.500 7.500 0 0 0 21.500 18.750L15 30A15 15 0 0 1 2 7.500z" fill="#2d9a48" />
      <circle cx="15" cy="15" r="7.4" fill="#fff" /><circle cx="15" cy="15" r="5.8" fill="#2f7de9" />
    </svg>
  );
}

function FirefoxIcon({ className }) {
  return (
    <svg viewBox="0 0 30 30" className={className}>
      <defs><linearGradient id="fox" x1=".8" y1="0" x2=".3" y2="1"><stop offset="0" stopColor="#ffe04a" /><stop offset=".45" stopColor="#ff8a1f" /><stop offset=".8" stopColor="#ff3647" /><stop offset="1" stopColor="#e31587" /></linearGradient></defs>
      <path d="M19 0c1 3 4 4.500 5 7l1-2c3 3.500 4 7 4 10.500A14 14 0 0 1 1 15.500C1 12 2 9 3 7.500V5l2.500 1.800L7.500 4l2 2.500C12 6 14 6 16 6.500 16 4 17 2 19 0z" fill="url(#fox)" />
      <circle cx="15.5" cy="14.5" r="6" fill="#7a47d8" />
      <path d="M4 9c4-2 7-1 9 .5h3c-.5 1.800-3 2-3.500 3-.3 1.200 1 2.200 3 2-1 2.500-5.500 3.500-7.500.5C8 18 10 21 14.500 21.500c-6 1.500-11-4-10.500-12.500z" fill="#ff9a22" />
      <path d="M18 7.500c4 1.500 6 5 4.500 9.500 3-3 3.500-8.500 0-12z" fill="#ffc933" />
    </svg>
  );
}

function WifiIcon({ className }) {
  return (
    <svg viewBox="0 0 20 20" className={className} fill="none" stroke="#222" strokeWidth="1.5">
      <path d="M.8 7a13 13 0 0 1 18.400 0" stroke="#aeb6c6" />
      <path d="M3.300 9.800a9.500 9.500 0 0 1 13.400 0M6 12.600a5.700 5.700 0 0 1 8 0" />
      <circle cx="10" cy="15.2" r="1.7" fill="#222" stroke="none" />
    </svg>
  );
}

function VolumeIcon({ className }) {
  return (
    <svg viewBox="0 0 20 20" className={className} fill="none" stroke="#222" strokeWidth="1.3">
      <path d="M1 7.500h3.500L9 3.500v13l-4.500-4H1z" strokeLinejoin="round" />
      <path d="M11.500 7.500a3.500 3.500 0 0 1 0 5M14 5.200a6.800 6.800 0 0 1 0 9.600" />
      <path d="M16.500 3a10 10 0 0 1 0 14" stroke="#aeb6c6" />
    </svg>
  );
}

function BatteryIcon({ className }) {
  return (
    <svg viewBox="0 0 20 20" className={className}>
      <rect x=".8" y="4.5" width="16" height="11.5" rx="2.5" fill="none" stroke="#222" strokeWidth="1.5" />
      <rect x="3" y="6.8" width="8" height="7" fill="#222" />
      <path d="M17.500 8h1a1.500 1.500 0 0 1 1.500 1.500v1.500a1.500 1.500 0 0 1-1.500 1.500h-1z" fill="#222" />
    </svg>
  );
}
